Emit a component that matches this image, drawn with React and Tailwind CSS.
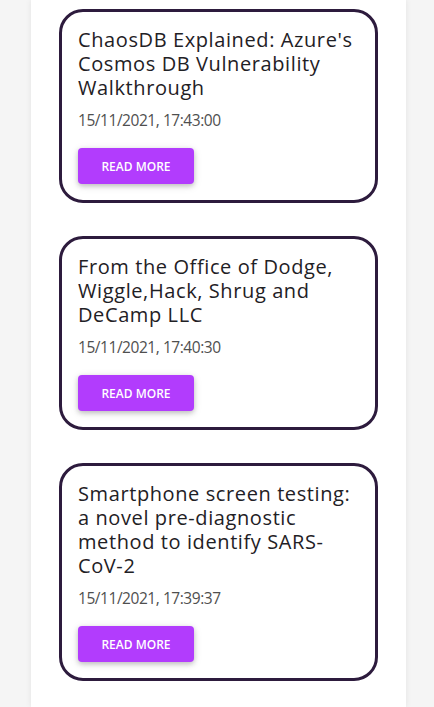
const posts = [
  { title: "ChaosDB Explained: Azure's Cosmos DB Vulnerability Walkthrough", date: '15/11/2021, 17:43:00' },
  { title: 'From the Office of Dodge, Wiggle,Hack, Shrug and DeCamp LLC', date: '15/11/2021, 17:40:30' },
  { title: 'Smartphone screen testing: a novel pre-diagnostic method to identify SARS-CoV-2', date: '15/11/2021, 17:39:37' },
];

export default function App() {
  return (
    <div className="min-h-screen bg-[#f5f5f5] font-['Open_Sans',sans-serif]">
      <div className="ml-[31px] w-[375px] min-h-[707px] bg-white shadow-[0_0_6px_rgba(0,0,0,0.08)] px-[28px] pt-[9px] flex flex-col gap-[33px]">
        {posts.map((post) => (
          <div key={post.date} className="border-[3px] border-[#2d1b3d] rounded-[24px] p-4">
            <h5 className="text-[20px] leading-[24px] tracking-[0.6px] text-[#1f2125] mb-2">{post.title}</h5>
            <p className="text-[15.5px] leading-[24px] tracking-[-0.45px] text-[#4f4f4f] mb-4">{post.date}</p>
            <button className="w-[116px] h-9 pt-[2px] rounded bg-[#b23cfd] text-white text-[12px] font-semibold uppercase shadow-[0_2px_5px_rgba(0,0,0,0.2),0_2px_10px_rgba(0,0,0,0.1)]">
              Read more
            </button>
          </div>
        ))}
      </div>
    </div>
  );
}
